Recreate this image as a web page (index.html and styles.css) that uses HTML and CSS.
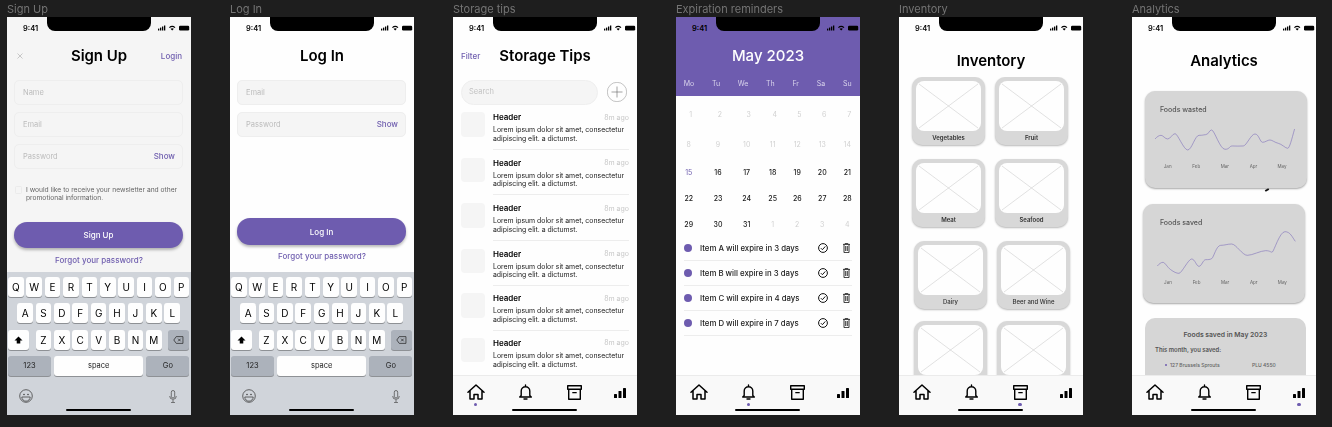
FILE: index.html
```html
<!DOCTYPE html>
<html lang="en">
<head>
<meta charset="utf-8">
<title>Food app screens</title>
<link rel="stylesheet" href="styles.css">
</head>
<body>
<svg class="sprite" aria-hidden="true">
  <symbol id="i-home" viewBox="0 0 18 16"><path d="M1 8.2 9 1l8 7.2M3 6.6V15h4v-4.6h4V15h4V6.6" fill="none" stroke="currentColor" stroke-width="1.5" stroke-linejoin="round" stroke-linecap="round"/></symbol>
  <symbol id="i-bell" viewBox="0 0 13 16"><path d="M6.5 1v1.4M2.2 11.6V7a4.3 4.3 0 0 1 8.6 0v4.6l1.5 1.4H.7zM5 15h3" fill="none" stroke="currentColor" stroke-width="1.4" stroke-linejoin="round" stroke-linecap="round"/></symbol>
  <symbol id="i-box" viewBox="0 0 15 15"><path d="M.7.7h13.6v3.6H.7zM1.7 4.3v10h11.6v-10M5.3 7.6h4.4" fill="none" stroke="currentColor" stroke-width="1.4" stroke-linejoin="round"/></symbol>
  <symbol id="i-bars" viewBox="0 0 12 10"><rect y="6" width="3" height="4" rx=".6" fill="currentColor"/><rect x="4.5" y="3" width="3" height="7" rx=".6" fill="currentColor"/><rect x="9" width="3" height="10" rx=".6" fill="currentColor"/></symbol>
  <symbol id="i-status" viewBox="0 0 32 6"><rect y="3.6" width="1.3" height="1.9" fill="currentColor"/><rect x="2" y="2.6" width="1.3" height="2.9" fill="currentColor"/><rect x="4" y="1.5" width="1.3" height="4" fill="currentColor"/><rect x="6" y=".5" width="1.3" height="5" fill="currentColor"/><path d="M11 2.2a5 5 0 0 1 6.4 0l-.8.9a3.8 3.8 0 0 0-4.8 0zM12.5 3.8a2.8 2.8 0 0 1 3.400 0l-1.700 1.800z" fill="currentColor"/><rect x="21" y=".8" width="10.2" height="4.6" rx="1.2" fill="currentColor"/></symbol>
  <symbol id="i-check" viewBox="0 0 10 10"><circle cx="5" cy="5" r="4.4" fill="none" stroke="currentColor" stroke-width="1"/><path d="m2.9 5.2 1.5 1.5 2.9-3.300" fill="none" stroke="currentColor" stroke-width="1"/></symbol>
  <symbol id="i-trash" viewBox="0 0 7 10"><path d="M0 1.4h7M2.2 1.2V.4h2.6v.8M1 1.600v8h5v-8M2.7 3v5M4.3 3v5" fill="none" stroke="currentColor" stroke-width=".9"/></symbol>
  <symbol id="i-ph" viewBox="0 0 65 50" preserveAspectRatio="none"><path d="M3 3l59 44M62 3 3 47" fill="none" stroke="#cfcfcf" stroke-width=".6"/></symbol>
</svg>

<main class="board">

<section class="col">
  <h2 class="label">Sign Up</h2>
  <div class="phone tint">
    <div class="status"><span>9:41</span><svg class="status-icons"><use href="#i-status"/></svg></div>
    <div class="head">
      <svg class="close" viewBox="0 0 6 6"><path d="M.5.5l5 5M5.5.5l-5 5" stroke="#bdbdbd" stroke-width=".8"/></svg>
      <h1 class="title">Sign Up</h1>
      <a class="link end">Login</a>
    </div>
    <div class="form">
      <div class="field">Name</div>
      <div class="field">Email</div>
      <div class="field">Password<span class="link">Show</span></div>
    </div>
    <div class="consent"><span class="box"></span><p>I would like to receive your newsletter and other promotional information.</p></div>
    <button class="cta cta-signup">Sign Up</button>
    <a class="forgot">Forgot your password?</a>
    <div class="keyboard">
      <div class="kr"><b>Q</b><b>W</b><b>E</b><b>R</b><b>T</b><b>Y</b><b>U</b><b>I</b><b>O</b><b>P</b></div>
      <div class="kr kr2"><b>A</b><b>S</b><b>D</b><b>F</b><b>G</b><b>H</b><b>J</b><b>K</b><b>L</b></div>
      <div class="kr"><b class="shift"><svg viewBox="0 0 10 9" width="9" height="8"><path d="M5 .5 9.5 5H7v3.5H3V5H.5z"/></svg></b><b class="z">Z</b><b>X</b><b>C</b><b>V</b><b>B</b><b>N</b><b>M</b><b class="del"><svg viewBox="0 0 12 9" width="11" height="8"><path d="M3.5.7H11v7.6H3.5L.7 4.5zM5.5 3l3 3M8.5 3l-3 3" fill="none" stroke="#222" stroke-width=".8"/></svg></b></div>
      <div class="kr kr4"><b class="fn">123</b><b class="space">space</b><b class="fn">Go</b></div>
      <div class="kfoot">
        <svg viewBox="0 0 14 14" width="14" height="14"><circle cx="7" cy="7" r="6.3" fill="none" stroke="#444" stroke-width=".8"/><circle cx="5" cy="5.5" r=".8" fill="#444"/><circle cx="9" cy="5.5" r=".8" fill="#444"/><path d="M2.8 8h8.4a4.2 4.2 0 0 1-8.4 0z" fill="none" stroke="#444" stroke-width=".8"/></svg>
        <svg viewBox="0 0 8 13" width="8" height="13"><rect x="2.3" y=".5" width="3.4" height="7.5" rx="1.7" fill="none" stroke="#555" stroke-width=".8"/><path d="M.7 6a3.3 3.3 0 0 0 6.6 0M4 9.5v3M2 12.6h4" fill="none" stroke="#555" stroke-width=".8"/></svg>
      </div>
    </div>
  </div>
</section>

<section class="col">
  <h2 class="label">Log In</h2>
  <div class="phone">
    <div class="status"><span>9:41</span><svg class="status-icons"><use href="#i-status"/></svg></div>
    <div class="head"><span></span><h1 class="title">Log In</h1><span></span></div>
    <div class="form">
      <div class="field fill">Email</div>
      <div class="field fill">Password<span class="link">Show</span></div>
    </div>
    <button class="cta cta-login">Log In</button>
    <a class="forgot forgot-login">Forgot your password?</a>
    <div class="keyboard">
      <div class="kr"><b>Q</b><b>W</b><b>E</b><b>R</b><b>T</b><b>Y</b><b>U</b><b>I</b><b>O</b><b>P</b></div>
      <div class="kr kr2"><b>A</b><b>S</b><b>D</b><b>F</b><b>G</b><b>H</b><b>J</b><b>K</b><b>L</b></div>
      <div class="kr"><b class="shift"><svg viewBox="0 0 10 9" width="9" height="8"><path d="M5 .5 9.5 5H7v3.5H3V5H.5z"/></svg></b><b class="z">Z</b><b>X</b><b>C</b><b>V</b><b>B</b><b>N</b><b>M</b><b class="del"><svg viewBox="0 0 12 9" width="11" height="8"><path d="M3.5.7H11v7.6H3.5L.7 4.5zM5.5 3l3 3M8.5 3l-3 3" fill="none" stroke="#222" stroke-width=".8"/></svg></b></div>
      <div class="kr kr4"><b class="fn">123</b><b class="space">space</b><b class="fn">Go</b></div>
      <div class="kfoot">
        <svg viewBox="0 0 14 14" width="14" height="14"><circle cx="7" cy="7" r="6.3" fill="none" stroke="#444" stroke-width=".8"/><circle cx="5" cy="5.5" r=".8" fill="#444"/><circle cx="9" cy="5.5" r=".8" fill="#444"/><path d="M2.8 8h8.4a4.2 4.2 0 0 1-8.4 0z" fill="none" stroke="#444" stroke-width=".8"/></svg>
        <svg viewBox="0 0 8 13" width="8" height="13"><rect x="2.3" y=".5" width="3.4" height="7.5" rx="1.7" fill="none" stroke="#555" stroke-width=".8"/><path d="M.7 6a3.3 3.3 0 0 0 6.6 0M4 9.5v3M2 12.6h4" fill="none" stroke="#555" stroke-width=".8"/></svg>
      </div>
    </div>
  </div>
</section>

<section class="col">
  <h2 class="label">Storage tips</h2>
  <div class="phone">
    <div class="status"><span>9:41</span><svg class="status-icons"><use href="#i-status"/></svg></div>
    <div class="head head-tips"><a class="link">Filter</a><h1 class="title">Storage Tips</h1><span></span></div>
    <div class="search-row">
      <div class="search">Search</div>
      <svg class="add" viewBox="0 0 20 20"><circle cx="10" cy="10" r="9.7" fill="none" stroke="#8a8a8a" stroke-width=".5"/><path d="M10 4.5v11M4.5 10h11" stroke="#666" stroke-width=".6"/></svg>
    </div>
    <div class="tips">
      <article class="tip"><div class="thumb"></div><div class="tip-body"><div class="tip-top"><h3>Header</h3><span>8m ago</span></div><p>Lorem ipsum dolor sit amet, consectetur adipiscing elit. a dictumst.</p></div></article>
      <article class="tip"><div class="thumb"></div><div class="tip-body"><div class="tip-top"><h3>Header</h3><span>8m ago</span></div><p>Lorem ipsum dolor sit amet, consectetur adipiscing elit. a dictumst.</p></div></article>
      <article class="tip"><div class="thumb"></div><div class="tip-body"><div class="tip-top"><h3>Header</h3><span>8m ago</span></div><p>Lorem ipsum dolor sit amet, consectetur adipiscing elit. a dictumst.</p></div></article>
      <article class="tip"><div class="thumb"></div><div class="tip-body"><div class="tip-top"><h3>Header</h3><span>8m ago</span></div><p>Lorem ipsum dolor sit amet, consectetur adipiscing elit. a dictumst.</p></div></article>
      <article class="tip"><div class="thumb"></div><div class="tip-body"><div class="tip-top"><h3>Header</h3><span>8m ago</span></div><p>Lorem ipsum dolor sit amet, consectetur adipiscing elit. a dictumst.</p></div></article>
      <article class="tip"><div class="thumb"></div><div class="tip-body"><div class="tip-top"><h3>Header</h3><span>8m ago</span></div><p>Lorem ipsum dolor sit amet, consectetur adipiscing elit. a dictumst.</p></div></article>
    </div>
    <nav class="tabs">
      <span class="tab t-home on"><svg><use href="#i-home"/></svg></span>
      <span class="tab t-bell"><svg><use href="#i-bell"/></svg></span>
      <span class="tab t-box"><svg><use href="#i-box"/></svg></span>
      <span class="tab t-bars"><svg><use href="#i-bars"/></svg></span>
    </nav>
  </div>
</section>

<section class="col">
  <h2 class="label">Expiration reminders</h2>
  <div class="phone">
    <header class="cal-head">
      <div class="status"><span>9:41</span><svg class="status-icons"><use href="#i-status"/></svg></div>
      <div class="head"><span></span><h1 class="title title-month">May 2023</h1><span></span></div>
      <div class="days"><span>Mo</span><span>Tu</span><span>We</span><span>Th</span><span>Fr</span><span>Sa</span><span>Su</span></div>
    </header>
    <div class="cal">
      <div class="week w1 past"><span>1</span><span>2</span><span>3</span><span>4</span><span>5</span><span>6</span><span>7</span></div>
      <div class="week w2 past"><span>8</span><span>9</span><span>10</span><span>11</span><span>12</span><span>13</span><span>14</span></div>
      <div class="week w3"><span class="today">15</span><span>16</span><span>17</span><span>18</span><span>19</span><span>20</span><span>21</span></div>
      <div class="week w4"><span>22</span><span>23</span><span>24</span><span>25</span><span>26</span><span>27</span><span>28</span></div>
      <div class="week w4"><span>29</span><span>30</span><span>31</span><span class="faint">1</span><span class="faint">2</span><span class="faint">3</span><span class="faint">4</span></div>
    </div>
    <ul class="reminders">
      <li><i class="dot"></i><span>Item A will expire in 3 days</span><svg class="ic-check"><use href="#i-check"/></svg><svg class="ic-trash"><use href="#i-trash"/></svg></li>
      <li><i class="dot"></i><span>Item B will expire in 3 days</span><svg class="ic-check"><use href="#i-check"/></svg><svg class="ic-trash"><use href="#i-trash"/></svg></li>
      <li><i class="dot"></i><span>Item C will expire in 4 days</span><svg class="ic-check"><use href="#i-check"/></svg><svg class="ic-trash"><use href="#i-trash"/></svg></li>
      <li><i class="dot"></i><span>Item D will expire in 7 days</span><svg class="ic-check"><use href="#i-check"/></svg><svg class="ic-trash"><use href="#i-trash"/></svg></li>
    </ul>
    <nav class="tabs">
      <span class="tab t-home"><svg><use href="#i-home"/></svg></span>
      <span class="tab t-bell on"><svg><use href="#i-bell"/></svg></span>
      <span class="tab t-box"><svg><use href="#i-box"/></svg></span>
      <span class="tab t-bars"><svg><use href="#i-bars"/></svg></span>
    </nav>
  </div>
</section>

<section class="col">
  <h2 class="label">Inventory</h2>
  <div class="phone">
    <div class="status"><span>9:41</span><svg class="status-icons"><use href="#i-status"/></svg></div>
    <div class="head head-low"><span></span><h1 class="title">Inventory</h1><span></span></div>
    <div class="shelf">
      <div class="grid">
        <div class="cat"><svg class="ph"><use href="#i-ph"/></svg><span>Vegetables</span></div>
        <div class="cat"><svg class="ph"><use href="#i-ph"/></svg><span>Fruit</span></div>
        <div class="cat"><svg class="ph"><use href="#i-ph"/></svg><span>Meat</span></div>
        <div class="cat"><svg class="ph"><use href="#i-ph"/></svg><span>Seafood</span></div>
        <div class="cat"><svg class="ph"><use href="#i-ph"/></svg><span>Dairy</span></div>
        <div class="cat"><svg class="ph"><use href="#i-ph"/></svg><span>Beer and Wine</span></div>
        <div class="cat"><svg class="ph"><use href="#i-ph"/></svg></div>
        <div class="cat"><svg class="ph"><use href="#i-ph"/></svg></div>
      </div>
    </div>
    <nav class="tabs">
      <span class="tab t-home"><svg><use href="#i-home"/></svg></span>
      <span class="tab t-bell"><svg><use href="#i-bell"/></svg></span>
      <span class="tab t-box on"><svg><use href="#i-box"/></svg></span>
      <span class="tab t-bars"><svg><use href="#i-bars"/></svg></span>
    </nav>
  </div>
</section>

<section class="col col-last">
  <h2 class="label">Analytics</h2>
  <div class="phone">
    <div class="status"><span>9:41</span><svg class="status-icons"><use href="#i-status"/></svg></div>
    <div class="head head-low"><span></span><h1 class="title">Analytics</h1><span></span></div>
    <div class="stats">
      <div class="stat stat-a">
        <h3>Foods wasted</h3>
        <svg class="chart chart-a" viewBox="60 370 485 100"><path d="M90 418C96 411 102 407 108 407S120 418 128 418 142 402 150 402 176 451 188 451 210 407 222 407 232 406 242 405 252 391 260 391 285 449 300 449 312 439 322 439 345 440 355 439 378 403 390 403 405 428 413 428 428 421 435 421 450 429 460 431 482 446 488 446 500 420 509 388"/></svg>
        <div class="months months-a"><span>Jan</span><span>Feb</span><span>Mar</span><span>Apr</span><span>May</span></div>
        <i class="stray"></i>
      </div>
      <div class="stat stat-b">
        <h3>Foods saved</h3>
        <svg class="chart chart-b" viewBox="52 40 485 150"><path d="M95 154C100 148 106 143 112 143S125 158 135 165 152 176 160 176 188 133 198 133 212 155 220 155 232 135 240 135 252 135 258 132 272 92 285 92 305 88 318 88 350 122 365 122 405 108 420 108 435 114 440 112 462 51 478 51 500 68 509 80"/></svg>
        <div class="months months-b"><span>Jan</span><span>Feb</span><span>Mar</span><span>Apr</span><span>May</span></div>
      </div>
      <div class="stat stat-c">
        <h3>Foods saved in May 2023</h3>
        <h4>This month, you saved:</h4>
        <div class="saved"><i></i><span>127 Brussels Sprouts</span><span>PLU 4550</span></div>
      </div>
    </div>
    <nav class="tabs">
      <span class="tab t-home"><svg><use href="#i-home"/></svg></span>
      <span class="tab t-bell"><svg><use href="#i-bell"/></svg></span>
      <span class="tab t-box"><svg><use href="#i-box"/></svg></span>
      <span class="tab t-bars on"><svg><use href="#i-bars"/></svg></span>
    </nav>
  </div>
</section>

</main>
</body>
</html>
```
FILE: styles.css
```css
* { box-sizing: border-box; margin: 0; padding: 0; }
html, body { height: 100%; }
body {
  background: #1e1e1e;
  font-family: Inter, "Noto Sans", "Liberation Sans", sans-serif;
  color: #000;
  overflow: hidden;
}
.sprite { position: absolute; width: 0; height: 0; }
.board { display: flex; gap: 39px; padding-left: 7px; opacity: .999; }
.col { width: 184px; flex: none; }
.col-last { margin-left: 10px; }
.label {
  height: 17px;
  font-size: 11px;
  line-height: 19px;
  font-weight: 400;
  color: #757575;
}

/* Phone frame */
.phone {
  position: relative;
  width: 184px;
  height: 398px;
  background: #fff;
  overflow: hidden;
  display: flex;
  flex-direction: column;
}
.phone.tint { background: #f6f6f6; }
.phone::before {
  content: "";
  position: absolute;
  z-index: 6;
  top: 0;
  left: 39.5px;
  width: 104px;
  height: 14px;
  background: #000;
  border-radius: 0 0 8px 8px;
}
.phone::after {
  content: "";
  position: absolute;
  z-index: 6;
  bottom: 4px;
  left: 59px;
  width: 65px;
  height: 2px;
  border-radius: 1px;
  background: #000;
}
.status {
  flex: none;
  height: 22px;
  padding: 0 1px 0 16px;
  display: flex;
  align-items: center;
  justify-content: space-between;
  font-size: 7.5px;
  font-weight: 600;
}
.status-icons { width: 32px; height: 6px; color: #000; }

/* Title bar */
.head {
  flex: none;
  height: 32px;
  display: grid;
  grid-template-columns: 1fr auto 1fr;
  align-items: center;
  padding: 1px 9px 0;
}
.head-low { height: 38px; padding-top: 6px; }
.head-tips { padding: 1px 8px 0; }
.title { font-size: 15px; line-height: 20px; font-weight: 600; letter-spacing: -.05px; }
.title-month { color: #fff; font-weight: 500; letter-spacing: 0; }
.close { width: 6px; height: 6px; margin-left: 1px; }
.link { color: #7160b0; font-size: 8px; font-weight: 500; }
.end { justify-self: end; }

/* Forms */
.form { display: flex; flex-direction: column; gap: 7.5px; padding: 9px 8px 0 7px; flex: none; }
.field {
  height: 24.5px;
  border: 1px solid #efefef;
  border-radius: 5px;
  background: #f6f6f6;
  padding: 0 7px 0 8px;
  display: flex;
  align-items: center;
  justify-content: space-between;
  font-size: 7.5px;
  color: #bdbdbd;
}
.consent { display: flex; gap: 4px; padding: 17px 6px 0 7.5px; flex: none; }
.box { width: 7.5px; height: 7.5px; margin-top: .5px; border: 1px solid #ececec; border-radius: 1.5px; flex: none; }
.consent p { font-size: 6.7px; line-height: 8px; color: #666; }
.cta {
  flex: none;
  display: block;
  margin-left: 7px;
  width: 169px;
  border: 0;
  color: #fff;
  background: #6f5db0;
  border-radius: 13px;
  font: 500 8px Inter, "Noto Sans", sans-serif;
  box-shadow: 0 2px 3px rgba(0, 0, 0, .28);
}
.cta-signup { height: 26px; margin-top: 20.5px; }
.cta-login { height: 27px; margin-top: 81.5px; }
.forgot { flex: none; display: block; margin-top: 5.5px; text-align: center; font-size: 8px; line-height: 12px; font-weight: 500; color: #7160b0; }
.forgot-login { margin-top: 5px; }

/* Keyboard */
.keyboard {
  margin-top: auto;
  height: 143px;
  flex: none;
  background: #d1d5db;
  padding: 5px 1px 0;
  display: flex;
  flex-direction: column;
  gap: 6.3px;
}
.kr { display: flex; gap: 2.8px; height: 20px; }
.kr b {
  width: 15.6px;
  height: 20px;
  background: #fff;
  border-radius: 3px;
  box-shadow: 0 1px 0 #8f9296;
  font-size: 10px;
  font-weight: 400;
  display: flex;
  align-items: center;
  justify-content: center;
}
.kr2 { padding-left: 9.3px; }
.kr b.shift { width: 20.7px; margin-right: 4.2px; }
.kr b.del { width: 20.3px; margin-left: 4px; background: #adb3bc; }
.kr4 b { font-size: 7.5px; color: #222; }
.kr4 { gap: 3px; }
.kr b.fn { width: 43px; background: #adb3bc; }
.kr b.space { width: 89.4px; }
.kfoot {
  display: flex;
  justify-content: space-between;
  align-items: center;
  padding: 7px 13.5px 0 11px;
}

/* Storage tips */
.search-row { flex: none; display: flex; align-items: center; gap: 9px; padding: 9px 0 0 8px; }
.search {
  width: 137px;
  height: 24.5px;
  border-radius: 12.5px;
  background: #f6f6f6;
  border: 1px solid #f0f0f0;
  padding-left: 7px;
  font-size: 7.5px;
  line-height: 22.5px;
  color: #c4c4c4;
}
.add { width: 20px; height: 20px; }
.tips { flex: 1; min-height: 0; overflow: hidden; padding: 7.5px 8px 0; }
.tip { display: flex; gap: 8px; height: 37.6px; margin-bottom: 8px; }
.tip:nth-child(n + 5) { margin-top: -1px; }
.thumb { width: 24px; height: 24.5px; border-radius: 4px; background: #f6f6f6; flex: none; }
.tip-body { flex: 1; border-bottom: 1px solid #eeeeee; }
.tip-top { display: flex; justify-content: space-between; align-items: center; height: 10px; }
.tip-top h3 { font-size: 8px; font-weight: 600; }
.tip-top span { font-size: 7px; color: #c9c9c9; }
.tip-body p { font-size: 6.9px; line-height: 8.7px; margin-top: 4px; color: #222; }

/* Tab bar */
.tabs {
  flex: none;
  margin-top: auto;
  height: 40px;
  background: #fafafa;
  border-top: 1px solid #ececec;
  display: flex;
  align-items: flex-start;
  padding: 8px 0 0 13.5px;
  position: relative;
  z-index: 2;
}
.tab { position: relative; display: block; color: #000; }
.tab svg { display: block; width: 100%; height: 100%; }
.t-home { width: 18px; height: 16px; }
.t-bell { width: 13px; height: 16px; margin-left: 34.5px; }
.t-box { width: 15px; height: 15px; margin: 1px 0 0 34.5px; }
.t-bars { width: 12px; height: 10px; margin: 4px 0 0 32.5px; }
.tab.on::after {
  content: "";
  position: absolute;
  left: 50%;
  margin-left: -1.8px;
  top: 18.5px;
  width: 3.6px;
  height: 3.6px;
  border-radius: 50%;
  background: #6f5db0;
}
.t-box.on::after { top: 17.5px; }
.t-bars.on::after { top: 14.5px; }

/* Calendar */
.cal-head { flex: none; height: 79px; background: #6f5db0; }
.days {
  display: grid;
  grid-template-columns: 26px 28px 26px 28.6px 22.2px 28.4px 24.2px;
  margin-top: 7px;
  font-size: 7px;
  line-height: 12px;
  color: #d9d4ec;
  text-align: center;
}
.cal { flex: none; }
.week {
  display: grid;
  grid-template-columns: 25.4px 33.2px 24.2px 27.8px 21.4px 28.6px 21.4px;
  height: 12px;
  font-size: 7px;
  line-height: 12px;
  font-weight: 500;
  color: #222;
  text-align: center;
}
.w1 { margin-top: 12.5px; padding-left: 2px; }
.w2 { margin-top: 18px; }
.w3 { margin-top: 16px; }
.w4 { margin-top: 14px; }
.past, .faint { color: #d2d2d2; font-weight: 400; }
.today { color: #7160b0; font-weight: 400; }
.reminders { list-style: none; margin: 5px 8px 0; }
.reminders li {
  height: 25px;
  border-bottom: 1px solid #eeeeee;
  display: flex;
  align-items: center;
  font-size: 7.8px;
  font-weight: 500;
  color: #222;
}
.dot { width: 8px; height: 8px; border-radius: 50%; background: #6f5db0; margin-right: 8px; flex: none; }
.reminders span { width: 118.3px; white-space: nowrap; }
.ic-check { width: 10px; height: 10px; color: #111; flex: none; }
.ic-trash { width: 7px; height: 10px; margin-left: 14.5px; color: #222; flex: none; }

/* Inventory */
.shelf { flex: 1; min-height: 0; overflow: hidden; padding-left: 13px; }
.grid { display: grid; grid-template-columns: 73px 73px; column-gap: 10px; row-gap: 14px; }
.cat {
  width: 73px;
  height: 68px;
  background: #d9d9d9;
  border-radius: 10px;
  padding: 4px;
  text-align: center;
  box-shadow: 0 1px 2px rgba(0, 0, 0, .28);
}
.cat:nth-child(n + 5) { margin-left: 2px; }
.cat:nth-child(n + 7) { margin-top: -2px; }
.ph { display: block; width: 65px; height: 50px; background: #fff; border-radius: 8px; }
.cat span { display: block; font-size: 6px; line-height: 8px; margin-top: 3px; font-weight: 600; color: #333; white-space: nowrap; }
.cat:nth-child(n + 5) span { font-weight: 500; }

/* Analytics */
.stats { flex: 1; min-height: 0; overflow: hidden; padding-left: 13px; }
.stat {
  position: relative;
  width: 162px;
  background: #d7d7d7;
  border-radius: 10px;
  box-shadow: 0 1px 2px rgba(0, 0, 0, .35);
}
.stat h3 { font-size: 7px; line-height: 10px; font-weight: 500; color: #555; }
.stat-a { height: 97px; margin-top: 14px; padding: 14px 0 0; }
.stat-b { height: 99px; margin: 16px 0 0 -2px; padding: 14px 0 0; }
.stat-a h3 { padding-left: 15px; }
.stat-b h3 { padding-left: 17px; }
.stat-c { width: 161px; height: 80px; margin-top: 15px; padding: 12px 10px 0; box-shadow: none; }
.stat-c h3 { text-align: center; font-weight: 600; font-size: 6.8px; }
.stat-c h4 { font-size: 5.9px; line-height: 10px; margin-top: 5px; font-weight: 600; color: #555; }
.saved { display: flex; align-items: center; margin-top: 5px; padding-left: 10px; font-size: 5px; line-height: 10px; font-weight: 500; color: #666; }
.saved i { width: 2px; height: 2px; border-radius: 50%; background: #6f5db0; margin-right: 3px; flex: none; }
.saved span:nth-of-type(1) { width: 82px; flex: none; }
.chart { display: block; width: 161.67px; fill: none; }
.chart path { fill: none; stroke: #7f70bb; stroke-width: 1.8; }
.chart-a { height: 33.3px; margin-top: 8px; }
.chart-b { height: 50px; margin-top: .3px; }
.months { display: grid; grid-template-columns: repeat(5, 28.6px); font-size: 4.5px; line-height: 8px; color: #666; text-align: center; }
.months-a { margin-top: 7px; padding-left: 8.4px; }
.months-b { margin-top: .7px; padding-left: 10.7px; }
.stray {
  position: absolute;
  left: 120px;
  bottom: -3px;
  width: 4px;
  height: 2px;
  background: #111;
  transform: rotate(-30deg);
}
```
